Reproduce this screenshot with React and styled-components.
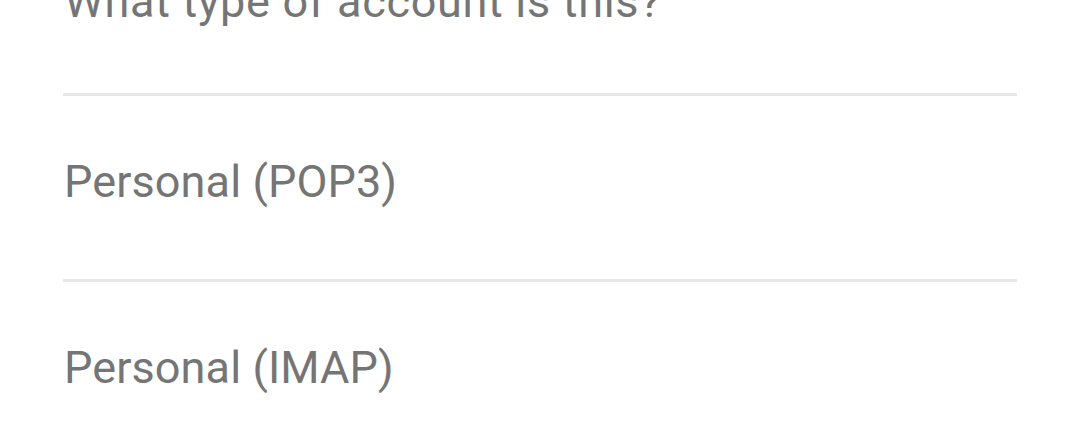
import React from "react";
import styled, { createGlobalStyle } from "styled-components";

const Global = createGlobalStyle`
  html, body { margin: 0; padding: 0; background: #ffffff; }
  body { font-family: Roboto, "Noto Sans", sans-serif; overflow: hidden; }
`;

const Page = styled.div`
  width: 1079px;
  height: 430px;
  overflow: hidden;
  padding: 0 62px 0 63px;
  box-sizing: border-box;
`;

const Header = styled.div`
  height: 117px;
  margin-top: -24px;
  font-size: 45px;
  line-height: 52px;
  letter-spacing: 0.7px;
  color: #757575;
  padding-left: 1px;
`;

const List = styled.ul`
  list-style: none;
  margin: 0;
  padding: 0;
`;

const Item = styled.li`
  border-top: 3px solid #e8e8e8;
  height: 171px;
  display: flex;
  align-items: center;
  padding-left: 1px;
  padding-bottom: 12px;
  font-size: 45px;
  letter-spacing: 0.1px;
  color: #757575;
  box-sizing: content-box;
`;

export default function App() {
  return (
    <>
      <Global />
      <Page>
        <Header>What type of account is this?</Header>
        <List>
          <Item>Personal (POP3)</Item>
          <Item>Personal (IMAP)</Item>
        </List>
      </Page>
    </>
  );
}
